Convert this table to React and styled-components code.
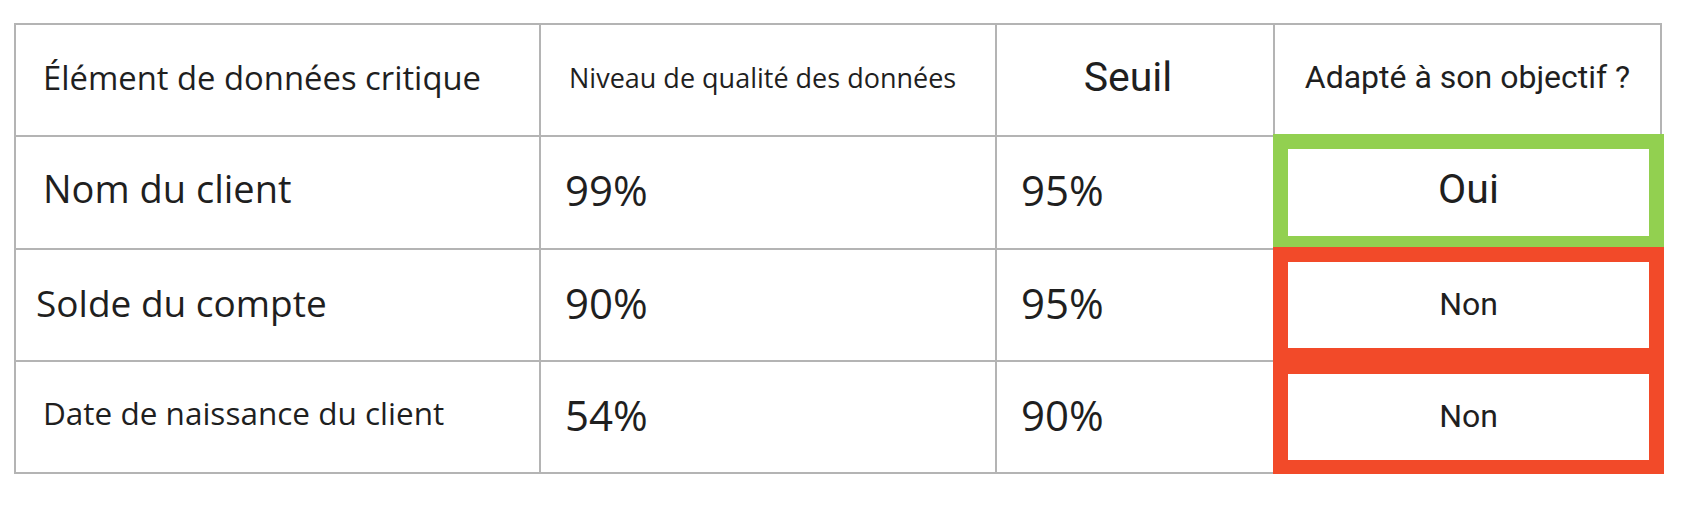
import React from 'react'
import styled, { createGlobalStyle } from 'styled-components'

const GlobalStyle = createGlobalStyle`
  body {
    margin: 0;
    background: #ffffff;
    color: #1f1f1f;
    font-family: 'Open Sans', sans-serif;
  }
`

const rows = [
  { name: 'Nom du client', nameSize: 38, nameInset: 27, lift: 10, level: '99%', threshold: '95%', fit: true },
  { name: 'Solde du compte', nameSize: 37, nameInset: 20, lift: 5, level: '90%', threshold: '95%', fit: false },
  { name: 'Date de naissance du client', nameSize: 31.5, nameInset: 27, lift: 9, level: '54%', threshold: '90%', fit: false }
]

const App = () => {
  return <Page>
    <GlobalStyle />
    <Table>
      {/* header */}
      <Cell $inset={27} $size={32.8}>Élément de données critique</Cell>
      <Cell $inset={28} $size={27}>Niveau de qualité des données</Cell>
      <Cell $center $alt $size={41} $shift={14}>Seuil</Cell>
      <Cell $center $alt $size={32}>Adapté à son objectif ?</Cell>
      {/* body */}
      {rows.map((r) => <React.Fragment key={r.name}>
        <Cell $inset={r.nameInset} $size={r.nameSize} $lift={r.lift}>{r.name}</Cell>
        <Cell $inset={24} $size={42}>{r.level}</Cell>
        <Cell $inset={24} $size={42}>{r.threshold}</Cell>
        <Status $fit={r.fit}>
          <StatusLabel $fit={r.fit}>{r.fit ? 'Oui' : 'Non'}</StatusLabel>
        </Status>
      </React.Fragment>)}
    </Table>
  </Page>
}

const Page = styled.main`
  padding: 23px 0 0 14px;
`

const Table = styled.div`
  display: grid;
  grid-template-columns: 523px 454px 276px 385px;
  grid-template-rows: 110px 111px 110px 110px;
  gap: 2px;
  padding: 2px;
  width: max-content;
  background: #b4b4b4;
`

const Cell = styled.div`
  display: flex;
  align-items: center;
  justify-content: ${(p) => (p.$center ? 'center' : 'flex-start')};
  padding-left: ${(p) => (p.$center ? 0 : p.$inset)}px;
  padding-right: ${(p) => p.$shift || 0}px;
  padding-bottom: ${(p) => p.$lift ?? 6}px;
  background: #ffffff;
  font-family: ${(p) => (p.$alt ? "Roboto, 'Open Sans'" : "'Open Sans'")}, sans-serif;
  font-size: ${(p) => p.$size}px;
  white-space: nowrap;
`

// coloured frame round the yes / no answer, spilling over the grid lines
const Status = styled.div`
  display: flex;
  margin: -3px -4px -3px -2px;
  padding: 15px;
  background: ${(p) => (p.$fit ? '#92d050' : '#f24a29')};
`

const StatusLabel = styled.div`
  flex: 1;
  display: flex;
  align-items: center;
  justify-content: center;
  padding-bottom: ${(p) => (p.$fit ? 7 : 3)}px;
  background: #ffffff;
  font-family: Roboto, 'Open Sans', sans-serif;
  font-size: ${(p) => (p.$fit ? 41 : 32)}px;
`

export default App
